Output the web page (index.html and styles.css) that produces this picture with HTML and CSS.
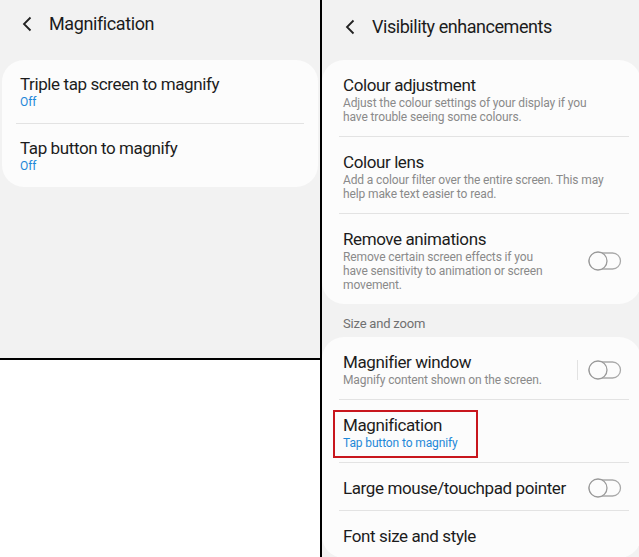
FILE: index.html
```html
<!DOCTYPE html>
<html>

<head>
    <title>Magnification</title>
    <link rel="stylesheet" href="styles.css">
</head>

<body>
    <div class="left-col">
        <div class="screen screen-left">
            <div class="header">
                <svg class="back" width="10" height="16" viewBox="0 0 10 16">
                    <path d="M8.5 1.5 L2 8 L8.5 14.5" fill="none" stroke="#222" stroke-width="1.8" />
                </svg>
                <span class="header-title">Magnification</span>
            </div>
            <div class="card">
                <div class="row">
                    <div class="row-text">
                        <div class="row-title">Triple tap screen to magnify</div>
                        <div class="row-sub blue">Off</div>
                    </div>
                </div>
                <div class="row">
                    <div class="row-text">
                        <div class="row-title">Tap button to magnify</div>
                        <div class="row-sub blue">Off</div>
                    </div>
                </div>
            </div>
        </div>
    </div>

    <div class="screen screen-right">
        <div class="header">
            <svg class="back" width="10" height="16" viewBox="0 0 10 16">
                <path d="M8.5 1.5 L2 8 L8.5 14.5" fill="none" stroke="#222" stroke-width="1.8" />
            </svg>
            <span class="header-title">Visibility enhancements</span>
        </div>

        <div class="card">
            <div class="row">
                <div class="row-text">
                    <div class="row-title">Colour adjustment</div>
                    <div class="row-sub">Adjust the colour settings of your display if you have trouble seeing some colours.</div>
                </div>
            </div>
            <div class="row">
                <div class="row-text">
                    <div class="row-title">Colour lens</div>
                    <div class="row-sub">Add a colour filter over the entire screen. This may help make text easier to read.</div>
                </div>
            </div>
            <div class="row">
                <div class="row-text">
                    <div class="row-title">Remove animations</div>
                    <div class="row-sub narrow">Remove certain screen effects if you have sensitivity to animation or screen movement.</div>
                </div>
                <svg class="toggle" width="34" height="20" viewBox="0 0 34 20">
                    <rect x="1" y="2" width="31.5" height="16" rx="8" fill="none" stroke="#a9a9a9" stroke-width="1.3" />
                    <circle cx="10" cy="10" r="9" fill="#fcfcfc" stroke="#9a9a9a" stroke-width="1.3" />
                </svg>
            </div>
        </div>

        <div class="section-label">Size and zoom</div>

        <div class="card">
            <div class="row">
                <div class="row-text">
                    <div class="row-title">Magnifier window</div>
                    <div class="row-sub">Magnify content shown on the screen.</div>
                </div>
                <div class="vline"></div>
                <svg class="toggle" width="34" height="20" viewBox="0 0 34 20">
                    <rect x="1" y="2" width="31.5" height="16" rx="8" fill="none" stroke="#a9a9a9" stroke-width="1.3" />
                    <circle cx="10" cy="10" r="9" fill="#fcfcfc" stroke="#9a9a9a" stroke-width="1.3" />
                </svg>
            </div>
            <div class="row">
                <div class="row-text highlight">
                    <div class="row-title">Magnification</div>
                    <div class="row-sub blue">Tap button to magnify</div>
                </div>
            </div>
            <div class="row">
                <div class="row-text">
                    <div class="row-title">Large mouse/touchpad pointer</div>
                </div>
                <svg class="toggle" width="34" height="20" viewBox="0 0 34 20">
                    <rect x="1" y="2" width="31.5" height="16" rx="8" fill="none" stroke="#a9a9a9" stroke-width="1.3" />
                    <circle cx="10" cy="10" r="9" fill="#fcfcfc" stroke="#9a9a9a" stroke-width="1.3" />
                </svg>
            </div>
            <div class="row">
                <div class="row-text">
                    <div class="row-title">Font size and style</div>
                </div>
            </div>
        </div>
    </div>
</body>

</html>
```

FILE: styles.css
```css
body {
    margin: 0;
    padding: 0;
    background: #ffffff;
    font-family: Roboto, 'Noto Sans', sans-serif;
    color: #1c1c1c;
    display: flex;
    height: 557px;
    overflow: hidden;
}

.left-col {
    width: 320px;
    flex-shrink: 0;
    border-right: 2px solid #000000;
    background: #ffffff;
}

.screen {
    background: #f2f2f2;
}

.screen-left {
    height: 358px;
    border-bottom: 2px solid #000000;
    padding: 0 2px;
}

.screen-right {
    flex: 1;
    min-width: 0;
}

.header {
    display: flex;
    align-items: center;
    height: 24px;
}

.screen-left .header {
    padding: 12px 0 24px 20px;
}

.screen-right .header {
    padding: 15px 0 21px 23px;
}

.back {
    display: block;
    margin-right: 17px;
}

.header-title {
    font-size: 18px;
    line-height: 24px;
    letter-spacing: -0.4px;
}

.screen-right .header-title {
    letter-spacing: -0.45px;
}

.card {
    background: #fcfcfc;
    border-radius: 22px;
}

.screen-left .row {
    margin: 0 14px;
    padding: 14px 4px 14px 4px;
}

.screen-right .card {
    margin-right: -2px;
}

.screen-right .row {
    margin: 0 12px 0 17px;
    padding: 15px 7px 12px 4px;
}

.row {
    display: flex;
    align-items: center;
}

.row + .row {
    border-top: 1px solid #e3e3e3;
}

.row-text {
    flex: 1;
    min-width: 0;
}

.row-title {
    font-size: 17px;
    line-height: 20px;
    letter-spacing: -0.4px;
}

.row-sub {
    font-size: 12px;
    line-height: 14px;
    letter-spacing: -0.12px;
    margin-top: 1px;
    color: #8a8a8a;
    max-width: 262px;
}

.row-sub.narrow {
    max-width: 215px;
}

.row-sub.blue {
    color: #1f88d8;
}

.vline {
    width: 1px;
    height: 20px;
    background: #e2e2e2;
    margin-right: 10px;
}

.toggle {
    display: block;
    flex-shrink: 0;
}

.section-label {
    font-size: 13px;
    line-height: 16px;
    letter-spacing: -0.2px;
    color: #707070;
    padding: 12px 0 5px 21px;
}

.highlight {
    flex: 0 0 auto;
    border: 2px solid #c8161d;
    padding: 3px 18px 6px 8px;
    margin: -5px 0 -8px -10px;
}
```
